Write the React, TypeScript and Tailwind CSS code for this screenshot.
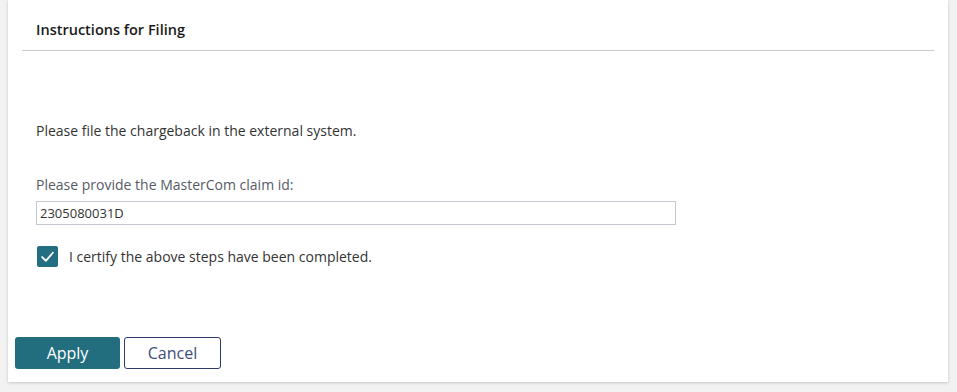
import { useState } from "react";

export default function App() {
  const [claimId, setClaimId] = useState("2305080031D");
  const [certified, setCertified] = useState(true);

  return (
    <div className="h-[392px] w-[957px] bg-[#f2f2f2] font-['Open_Sans',sans-serif]">
      <div className="ml-2 flex h-[382px] w-[940px] flex-col bg-white shadow-[0_1px_3px_rgba(0,0,0,0.18)]">
        {/* Header */}
        <div className="mx-[14px] flex h-[51px] items-end border-b border-[#cccccc] pb-[10px] pl-[14px]">
          <h2 className="text-[14.5px] font-semibold leading-[20px] text-[#1a1a1a]">
            Instructions for Filing
          </h2>
        </div>

        {/* Body */}
        <div className="flex flex-col px-[28px]">
          <p className="mt-[70px] text-[14px] leading-[20px] text-[#333333]">
            Please file the chargeback in the external system.
          </p>

          <label
            htmlFor="claimId"
            className="mt-[34px] text-[14px] leading-[20px] text-[#555b66]"
          >
            Please provide the MasterCom claim id:
          </label>
          <input
            id="claimId"
            type="text"
            value={claimId}
            onChange={(e) => setClaimId(e.target.value)}
            className="mt-[6px] h-[24px] w-[640px] border border-[#c3c8d0] px-[3px] text-[13px] text-[#333333] outline-none"
          />

          <label className="mt-[21px] flex cursor-pointer items-center gap-[11px]">
            <button
              type="button"
              onClick={() => setCertified(!certified)}
              className={`ml-px flex h-[21px] w-[21px] items-center justify-center rounded-[2px] ${
                certified ? "bg-[#236e80]" : "border border-[#8a8f99] bg-white"
              }`}
            >
              {certified && (
                <svg width="15" height="15" viewBox="0 0 14 14" fill="none">
                  <path
                    d="M2 7.5 L5.5 11 L12 3.5"
                    stroke="white"
                    strokeWidth="1.7"
                    strokeLinecap="round"
                    strokeLinejoin="round"
                  />
                </svg>
              )}
            </button>
            <span className="text-[14px] leading-[20px] text-[#333333]">
              I certify the above steps have been completed.
            </span>
          </label>
        </div>

        {/* Actions */}
        <div className="mt-auto mb-[13px] flex gap-[4px] pl-[7px]">
          <button className="h-[32px] w-[105px] rounded-[3px] bg-[#226e7e] text-[16px] text-white">
            Apply
          </button>
          <button className="h-[32px] w-[97px] rounded-[3px] border border-[#2d3a6b] bg-white text-[16px] text-[#3e4c7c]">
            Cancel
          </button>
        </div>
      </div>
    </div>
  );
}
